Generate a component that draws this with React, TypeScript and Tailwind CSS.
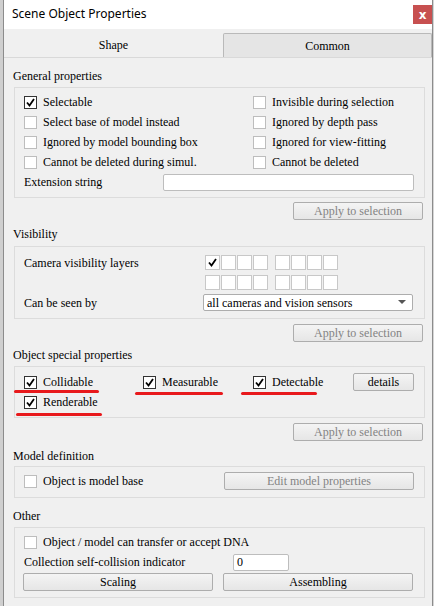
import React from "react";

const serif = "font-['Liberation_Serif',serif]";

function Tick() {
  return (
    <svg width="9" height="9" viewBox="0 0 9 9">
      <path d="M1 4.5 L3.5 7.5 L8 1" fill="none" stroke="#000" strokeWidth="1.8" />
    </svg>
  );
}

function Check({ checked = false }: { checked?: boolean }) {
  return (
    <span
      className={`flex h-[13px] w-[13px] shrink-0 items-center justify-center border bg-white ${
        checked ? "border-[#333]" : "border-[#bdbdbd]"
      }`}
    >
      {checked && <Tick />}
    </span>
  );
}

function CheckRow({ label, checked, className = "" }: { label: string; checked?: boolean; className?: string }) {
  return (
    <div className={`flex h-[20px] items-center gap-[6px] ${className}`}>
      <Check checked={checked} />
      <span className={`${serif} text-[12px] text-black`}>{label}</span>
    </div>
  );
}

function Btn({
  label,
  disabled,
  className = "",
}: {
  label: string;
  disabled?: boolean;
  className?: string;
}) {
  return (
    <div
      className={`${serif} flex h-[18px] items-center justify-center rounded-[2px] border border-[#adadad] bg-gradient-to-b from-[#f4f4f4] to-[#e6e6e6] text-[12px] ${
        disabled ? "text-[#838383]" : "text-black"
      } ${className}`}
    >
      {label}
    </div>
  );
}

function Header({ label, className = "" }: { label: string; className?: string }) {
  return <div className={`${serif} flex h-[20px] items-center pl-[9px] text-[12px] ${className}`}>{label}</div>;
}

function Box({ children, className = "" }: { children: React.ReactNode; className?: string }) {
  return (
    <div className={`relative ml-[10px] w-[411px] border border-[#dcdcdc] pl-[9px] pr-[10px] ${className}`}>
      {children}
    </div>
  );
}

function Apply({ className = "" }: { className?: string }) {
  return (
    <div className={`flex justify-end pr-[9px] ${className}`}>
      <Btn label="Apply to selection" disabled className="w-[130px]" />
    </div>
  );
}

function Layers({ first }: { first?: boolean }) {
  const group = (start: number) =>
    [0, 1, 2, 3].map((i) => (
      <span key={start + i} className="flex h-[15px] w-[15px] items-center justify-center border border-[#c8c8c8] bg-white">
        {first && start + i === 0 && <Tick />}
      </span>
    ));
  return (
    <div className="flex gap-[7px]">
      <div className="flex gap-[1px]">{group(0)}</div>
      <div className="flex gap-[1px]">{group(4)}</div>
    </div>
  );
}

function Mark({ className }: { className: string }) {
  return <span className={`absolute h-[3px] rounded-full bg-[#e8191c] ${className}`} />;
}

export default function App() {
  return (
    <div className="flex h-[606px] w-[434px] overflow-hidden bg-[#d6d6d6]">
      <div className="w-[3px] shrink-0 bg-[#cfcfcf]" />
      <div className="flex w-[430px] shrink-0 flex-col border-r border-l border-[#8c8c8c] bg-[#f0f0f0]">
        <div className="flex h-[29px] items-start justify-between bg-white">
          <span className="mt-[5px] pl-[8px] font-['Noto_Sans',sans-serif] text-[12px] text-black">
            Scene Object Properties
          </span>
          <span className="mt-[5px] flex h-[19px] w-[19px] items-center justify-center bg-[#c75050] font-['DejaVu_Sans',sans-serif] text-[12px] font-bold text-white">
            x
          </span>
        </div>
        <div className="mt-[4px] flex h-[24px]">
          <div className={`${serif} flex w-[219px] items-center justify-center text-[12px]`}>Shape</div>
          <div className={`${serif} flex flex-1 items-center justify-center rounded-t-[2px] border border-b-0 border-[#b9b9b9] bg-[#e5e5e5] text-[12px]`}>
            Common
          </div>
        </div>
        <div className="flex-1 border-t border-[#d9d9d9]">
          <Header label="General properties" className="mt-[8px]" />
          <Box className="mt-[1px] pt-[4px] pb-[5px]">
            <div className="grid grid-cols-[229px_1fr]">
              <CheckRow label="Selectable" checked />
              <CheckRow label="Invisible during selection" />
              <CheckRow label="Select base of model instead" />
              <CheckRow label="Ignored by depth pass" />
              <CheckRow label="Ignored by model bounding  box" />
              <CheckRow label="Ignored for view-fitting" />
              <CheckRow label="Cannot be deleted during simul." />
              <CheckRow label="Cannot be deleted" />
            </div>
            <div className="flex h-[20px] items-center justify-between">
              <span className={`${serif} text-[12px]`}>Extension string</span>
              <span className="h-[17px] w-[251px] rounded-[2px] border border-[#bdbdbd] bg-white" />
            </div>
          </Box>
          <Apply className="mt-[4px]" />

          <Header label="Visibility" className="mt-[4px]" />
          <Box className="mt-[2px] pt-[8px] pb-[7px]">
            <div className="flex items-start">
              <span className={`${serif} flex h-[15px] w-[180px] items-center text-[12px]`}>Camera visibility layers</span>
              <div className="ml-[1px] flex flex-col gap-[5px]">
                <Layers first />
                <Layers />
              </div>
            </div>
            <div className="mt-[4px] flex h-[17px] items-center">
              <span className={`${serif} w-[179px] text-[12px]`}>Can be seen by</span>
              <div className="flex h-[17px] w-[210px] items-center justify-between rounded-[2px] border border-[#adadad] bg-white pl-[3px] pr-[6px]">
                <span className={`${serif} text-[12px]`}>all cameras and vision sensors</span>
                <svg width="8" height="5" viewBox="0 0 8 5">
                  <path d="M0 0 H8 L4 4 Z" fill="#555" />
                </svg>
              </div>
            </div>
          </Box>
          <Apply className="mt-[5px]" />

          <Header label="Object special properties" className="mt-[3px]" />
          <Box className="mt-[1px] pt-[5px] pb-[5px]">
            <div className="flex h-[20px] items-center">
              <CheckRow label="Collidable" checked className="w-[119px]" />
              <CheckRow label="Measurable" checked className="w-[110px]" />
              <CheckRow label="Detectable" checked className="w-[100px]" />
              <Btn label="details" className="w-[61px]" />
            </div>
            <CheckRow label="Renderable" checked />
            <Mark className="left-[-1px] top-[23px] w-[85px]" />
            <Mark className="left-[120px] top-[25px] w-[88px]" />
            <Mark className="left-[226px] top-[25px] w-[76px]" />
            <Mark className="left-[1px] top-[46px] w-[86px]" />
          </Box>
          <Apply className="mt-[5px]" />

          <Header label="Model definition" className="mt-[5px]" />
          <Box className="mt-0 pt-[4px] pb-[6px]">
            <div className="flex h-[20px] items-center justify-between">
              <CheckRow label="Object is model base" />
              <Btn label="Edit model properties" disabled className="w-[190px]" />
            </div>
          </Box>

          <Header label="Other" className="mt-[8px]" />
          <Box className="mt-[1px] pt-[4px] pb-[6px]">
            <CheckRow label="Object / model can transfer or accept DNA" />
            <div className="flex h-[20px] items-center">
              <span className={`${serif} w-[209px] text-[12px]`}>Collection self-collision indicator</span>
              <span className={`${serif} flex h-[17px] w-[56px] items-center rounded-[2px] border border-[#bdbdbd] bg-white pl-[3px] text-[12px]`}>
                0
              </span>
            </div>
            <div className="-ml-[1px] mt-[1px] flex gap-[10px]">
              <Btn label="Scaling" className="w-[190px]" />
              <Btn label="Assembling" className="w-[190px]" />
            </div>
          </Box>
        </div>
      </div>
    </div>
  );
}
